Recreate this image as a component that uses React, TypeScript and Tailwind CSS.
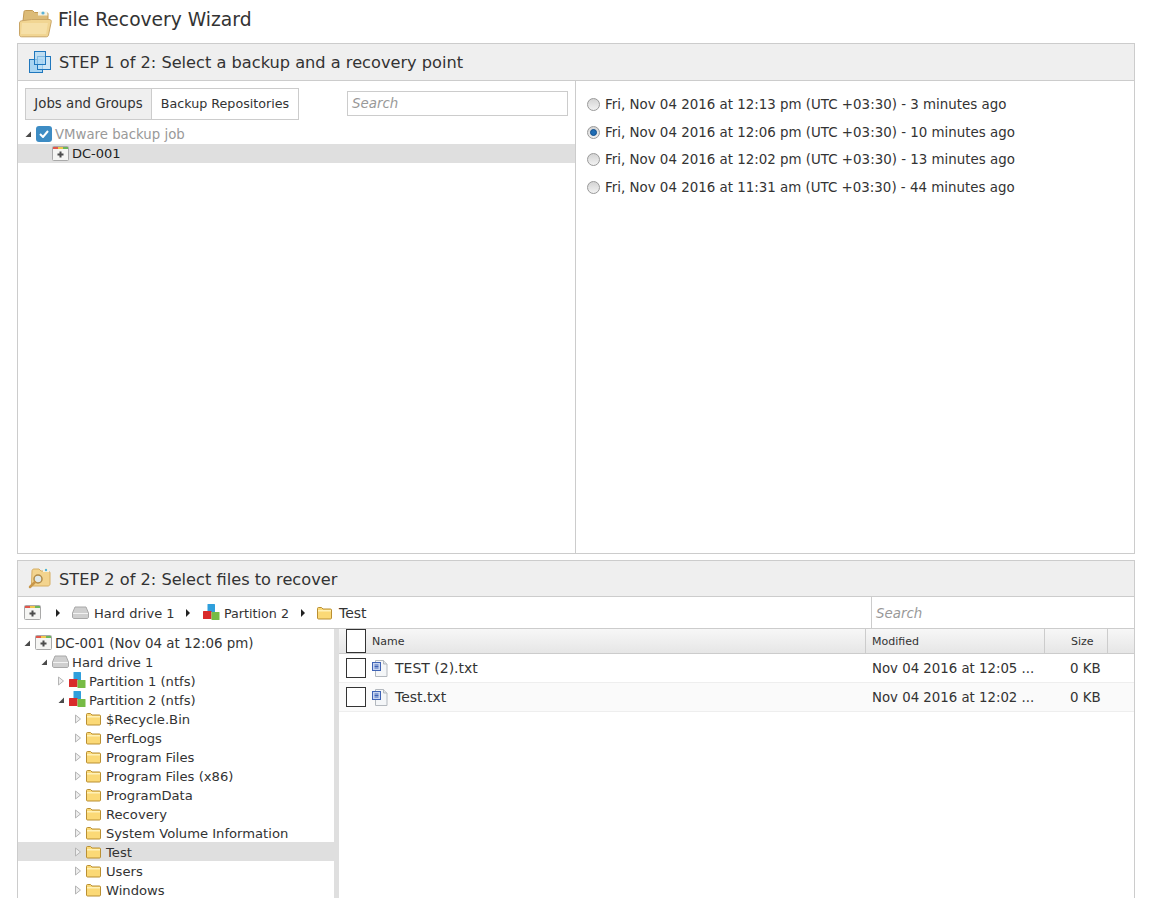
import React from "react";

const FONT = "font-['DejaVu_Sans','Noto_Sans',sans-serif]";

function FolderBig() {
  return (
    <svg width="34" height="32" viewBox="0 0 34 32">
      <path d="M6 6c0-1 .6-1.500 1.500-1.500h7l2 2h12c1 0 1.500.8 1.500 1.500v7H5z" fill="#dcbb78" stroke="#c39a55" />
      <path d="M20 5.500h9l.6 4h-9.600z" fill="#f7f3e4" />
      <circle cx="25" cy="7" r="1.600" fill="#5cb2d6" />
      <path d="M1.500 17c0-1.200.8-2 2-2.200l10-1.300h17.500c1.500 0 2.500.8 2.300 2L30.500 29c-.2 1.200-1 1.800-2 1.800H3.500c-1.200 0-2-.8-2-2z" fill="#f1d592" stroke="#c9a566" />
      <path d="M4 17h26l-2 11H3z" fill="#f6e0a8" />
    </svg>
  );
}
function StepOneIcon() {
  return (
    <svg width="24" height="24" viewBox="0 0 24 24">
      <rect x="1.500" y="9.500" width="13" height="13" fill="#a9d5f2" stroke="#1f77bd" />
      <rect x="9.500" y="6.500" width="13" height="13" fill="#c4e4f8" fillOpacity="0.75" stroke="#1f77bd" />
      <rect x="6.500" y="1.500" width="11" height="13" fill="#a9d5f2" fillOpacity="0.7" stroke="#1f77bd" />
    </svg>
  );
}
function StepTwoIcon() {
  return (
    <svg width="24" height="24" viewBox="0 0 24 24">
      <path d="M4 4c0-1 .6-2 2-2h5l2 2h7c1 0 2 1 2 2v11c0 1-1 2-2 2H5c-1 0-1.500-1-1.500-2z" fill="#f3d48e" stroke="#d6ae63" />
      <rect x="15" y="1" width="6" height="4" fill="#f6f3e6" />
      <circle cx="18" cy="3" r="1.200" fill="#4fb0dc" />
      <circle cx="10" cy="12" r="4" fill="#dfe9ea" stroke="#b08a48" strokeWidth="1.500" />
      <path d="M7 15l-5 5" stroke="#c8974a" strokeWidth="2.500" strokeLinecap="round" />
    </svg>
  );
}
function VmIcon() {
  return (
    <svg width="17" height="15" viewBox="0 0 17 15">
      <rect x="0.500" y="0.500" width="16" height="14" rx="1" fill="#f5f5f3" stroke="#a9a9a9" />
      <rect x="1" y="1" width="5" height="2" fill="#e2574c" />
      <rect x="6" y="1" width="5" height="2" fill="#f0c64d" />
      <rect x="11" y="1" width="5" height="2" fill="#6cb65a" />
      <rect x="7.500" y="5.500" width="2" height="6" fill="#4d4d4d" />
      <rect x="5.500" y="7.500" width="6" height="2" fill="#4d4d4d" />
    </svg>
  );
}
function DriveIcon() {
  return (
    <svg width="17" height="13" viewBox="0 0 17 13">
      <path d="M3 1h11l2.500 6v4c0 .8-.6 1.500-1.500 1.500H2c-.9 0-1.500-.7-1.500-1.500V7z" fill="#cfcfcf" stroke="#a8a8a8" />
      <rect x="1" y="7" width="15" height="1" fill="#f2f2f2" />
    </svg>
  );
}
function PartitionIcon() {
  return (
    <svg width="17" height="17" viewBox="0 0 17 17">
      <rect x="4.500" y="0" width="7.500" height="8" rx="0.500" fill="#2f9fdc" />
      <rect x="0" y="7" width="8.500" height="8" rx="0.500" fill="#d92b2b" />
      <rect x="8.500" y="8" width="8" height="8" rx="0.500" fill="#76bb45" />
    </svg>
  );
}
function FolderIcon() {
  return (
    <svg width="15" height="14" viewBox="0 0 15 14">
      <path d="M.500 2.500c0-.6.400-1 1-1h3l1.500 1.500h7.500c.6 0 1 .4 1 1v8c0 .6-.4 1-1 1h-12c-.6 0-1-.4-1-1z" fill="#fbd976" stroke="#b98f33" />
      <rect x="1" y="4" width="13" height="1.500" fill="#fff1b8" />
    </svg>
  );
}
function FileIcon() {
  return (
    <svg width="16" height="17" viewBox="0 0 16 17">
      <path d="M3.500 0.500h8l3.500 3.500v12.500h-11.500z" fill="#f4f6f8" stroke="#b3b8be" />
      <path d="M11.500 0.500v3.500h3.500" fill="#dfe3e7" stroke="#b3b8be" />
      <rect x="0.500" y="2.500" width="8" height="8" fill="#c9d6f0" stroke="#3f63b5" />
      <path d="M2.500 5h4M2.500 6.500h4M2.500 8h4" stroke="#3f63b5" />
    </svg>
  );
}
function Open() {
  return (
    <svg width="8" height="8" viewBox="0 0 8 8" className="shrink-0">
      <path d="M7 1.500V7H1.500z" fill="#4a4a4a" />
    </svg>
  );
}
function Closed() {
  return (
    <svg width="8" height="10" viewBox="0 0 8 10" className="shrink-0">
      <path d="M1.500 1l5 4-5 4z" fill="#eeeeee" stroke="#b5b5b5" />
    </svg>
  );
}
function Crumb() {
  return (
    <svg width="6" height="8" viewBox="0 0 6 8" className="shrink-0">
      <path d="M1 0l4 4-4 4z" fill="#222222" />
    </svg>
  );
}
function Radio({ on }: { on?: boolean }) {
  return (
    <span className="ml-[1px] w-[13px] h-[13px] rounded-full border border-[#999999] bg-gradient-to-b from-[#d4d4d4] to-[#f2f2f2] flex items-center justify-center shrink-0">
      {on && <span className="w-[7px] h-[7px] rounded-full bg-[#1f6db5] border border-[#0f4d8c]" />}
    </span>
  );
}
function TreeRow({ pad, arrow, icon, label, selected }: { pad: string; arrow: React.ReactNode; icon: React.ReactNode; label: string; selected?: boolean }) {
  return (
    <div className={`h-[19px] flex items-center ${pad} ${selected ? "bg-[#dfdfdf]" : ""}`}>
      <span className="w-[12px] flex justify-start shrink-0">{arrow}</span>
      <span className="w-[20px] flex justify-start shrink-0">{icon}</span>
      <span className="whitespace-nowrap pt-[1px]">{label}</span>
    </div>
  );
}
function Row({ name, mod, alt }: { name: string; mod: string; alt?: boolean }) {
  return (
    <div className={`h-[29px] flex items-center border-b border-[#eeeeee] ${alt ? "bg-[#fafafa]" : "bg-white"}`}>
      <span className="ml-[7px] w-[20px] h-[20px] border border-[#333333] bg-white shrink-0" />
      <span className="ml-[6px] shrink-0 flex"><FileIcon /></span>
      <span className="ml-[7px] w-[477px] shrink-0 text-[14px]">{name}</span>
      <span className="w-[198px] shrink-0 text-[13.300px]">{mod}</span>
      <span>0 KB</span>
    </div>
  );
}

const dates = [
  "Fri, Nov 04 2016 at 12:13 pm (UTC +03:30) - 3 minutes ago",
  "Fri, Nov 04 2016 at 12:06 pm (UTC +03:30) - 10 minutes ago",
  "Fri, Nov 04 2016 at 12:02 pm (UTC +03:30) - 13 minutes ago",
  "Fri, Nov 04 2016 at 11:31 am (UTC +03:30) - 44 minutes ago",
];
const folders = ["$Recycle.Bin", "PerfLogs", "Program Files", "Program Files (x86)", "ProgramData", "Recovery", "System Volume Information", "Test", "Users", "Windows"];

export default function App() {
  return (
    <div className={`${FONT} w-[1153px] h-[898px] overflow-hidden bg-white text-[13.4px] leading-[19px] text-[#333333]`}>
      <div className="h-[43px] pl-[18px] flex items-center">
        <FolderBig />
        <h1 className="ml-[6px] text-[18.700px] font-normal text-[#333333] leading-[38px] -mt-[4px]">File Recovery Wizard</h1>
      </div>

      <section className="mx-[17px] w-[1118px] h-[511px] border border-[#cccccc] flex flex-col">
        <div className="h-[37px] bg-[#efefef] border-b border-[#cccccc] flex items-center pl-[10px] shrink-0">
          <StepOneIcon />
          <span className="ml-[7px] pt-[1px] text-[16.200px]">STEP 1 of 2: Select a backup and a recovery point</span>
        </div>
        <div className="flex flex-1 min-h-0">
          <div className="w-[558px] border-r border-[#cccccc] shrink-0">
            <div className="flex pl-[7px] pt-[7px] h-[43px]">
              <div className="flex h-[32px] border border-[#cccccc]">
                <span className="w-[126px] bg-[#efefef] border-r border-[#cccccc] flex items-center justify-center pb-[1px] text-[13.300px]">Jobs and Groups</span>
                <span className="w-[146px] flex items-center justify-center pb-[1px] text-[12.700px]">Backup Repositories</span>
              </div>
              <div className="ml-[48px] mt-[3px] w-[221px] h-[25px] border border-[#cccccc] pl-[4px] italic text-[#999999] flex items-center">Search</div>
            </div>
            <div className="h-[20px] flex items-center pl-[6px] text-[#999999] text-[13.300px]">
              <Open />
              <span className="ml-[4px] w-[16px] h-[16px] rounded-[3px] bg-[#3d8cc4] flex items-center justify-center">
                <svg width="10" height="8" viewBox="0 0 10 8"><path d="M1 4l3 3 5-6" fill="none" stroke="#ffffff" strokeWidth="2" /></svg>
              </span>
              <span className="ml-[3px]">VMware backup job</span>
            </div>
            <div className="h-[19px] bg-[#dfdfdf] flex items-center pl-[34px] text-[#222222] text-[13px]">
              <VmIcon />
              <span className="ml-[3px]">DC-001</span>
            </div>
          </div>
          <div className="flex-1 pl-[10px] pt-[10px]">
            {dates.map((d, i) => (
              <div key={d} className="h-[27.500px] flex items-center">
                <Radio on={i === 1} />
                <span className="ml-[5px]">{d}</span>
              </div>
            ))}
          </div>
        </div>
      </section>

      <section className="mx-[17px] mt-[6px] w-[1118px] h-[400px] border border-[#cccccc] flex flex-col">
        <div className="h-[36px] bg-[#efefef] border-b border-[#cccccc] flex items-center pl-[10px] shrink-0">
          <StepTwoIcon />
          <span className="ml-[7px] pt-[2px] text-[16.200px]">STEP 2 of 2: Select files to recover</span>
        </div>
        <div className="h-[32px] border-b border-[#cccccc] flex items-center shrink-0">
          <div className="w-[853px] flex items-center pl-[6px] shrink-0 text-[13px]">
            <VmIcon />
            <span className="ml-[14px]"><Crumb /></span>
            <span className="ml-[11px]"><DriveIcon /></span>
            <span className="ml-[5px] pt-[1px] w-[80px] whitespace-nowrap">Hard drive 1</span>
            <span className="ml-[11px]"><Crumb /></span>
            <span className="ml-[12px]"><PartitionIcon /></span>
            <span className="ml-[4px] pt-[1px] w-[64px] whitespace-nowrap text-[12.700px]">Partition 2</span>
            <span className="ml-[12px]"><Crumb /></span>
            <span className="ml-[11px]"><FolderIcon /></span>
            <span className="ml-[7px] pt-[1px] text-[14px]">Test</span>
          </div>
          <div className="flex-1 h-full border-l border-[#cccccc] pl-[4px] pt-[1px] italic text-[#999999] flex items-center">Search</div>
        </div>
        <div className="flex flex-1 min-h-0">
          <div className="w-[321px] border-r-[5px] border-[#dfdfdf] shrink-0 pt-[4px] text-[13.150px]">
            <div className="text-[13.400px]">
              <TreeRow pad="pl-[5px]" arrow={<Open />} icon={<VmIcon />} label="DC-001 (Nov 04 at 12:06 pm)" />
            </div>
            <TreeRow pad="pl-[22px]" arrow={<Open />} icon={<DriveIcon />} label="Hard drive 1" />
            <TreeRow pad="pl-[39px]" arrow={<Closed />} icon={<PartitionIcon />} label="Partition 1 (ntfs)" />
            <TreeRow pad="pl-[39px]" arrow={<Open />} icon={<PartitionIcon />} label="Partition 2 (ntfs)" />
            {folders.map((f) => (
              <TreeRow key={f} pad="pl-[56px]" arrow={<Closed />} icon={<FolderIcon />} label={f} selected={f === "Test"} />
            ))}
          </div>
          <div className="flex-1">
            <div className="h-[25px] flex items-center text-[11px] bg-gradient-to-b from-[#f7f7f7] to-[#e6e6e6] border-b border-[#cccccc]">
              <span className="ml-[7px] w-[20px] h-[24px] border border-[#333333] bg-white shrink-0" />
              <span className="w-[500px] pl-[6px] h-full flex items-center border-r border-[#cccccc] shrink-0">Name</span>
              <span className="w-[179px] pl-[6px] h-full flex items-center border-r border-[#cccccc] shrink-0">Modified</span>
              <span className="w-[63px] pl-[26px] h-full flex items-center border-r border-[#cccccc] shrink-0">Size</span>
            </div>
            <Row name="TEST (2).txt" mod="Nov 04 2016 at 12:05 ..." />
            <Row name="Test.txt" mod="Nov 04 2016 at 12:02 ..." alt />
          </div>
        </div>
      </section>
    </div>
  );
}
